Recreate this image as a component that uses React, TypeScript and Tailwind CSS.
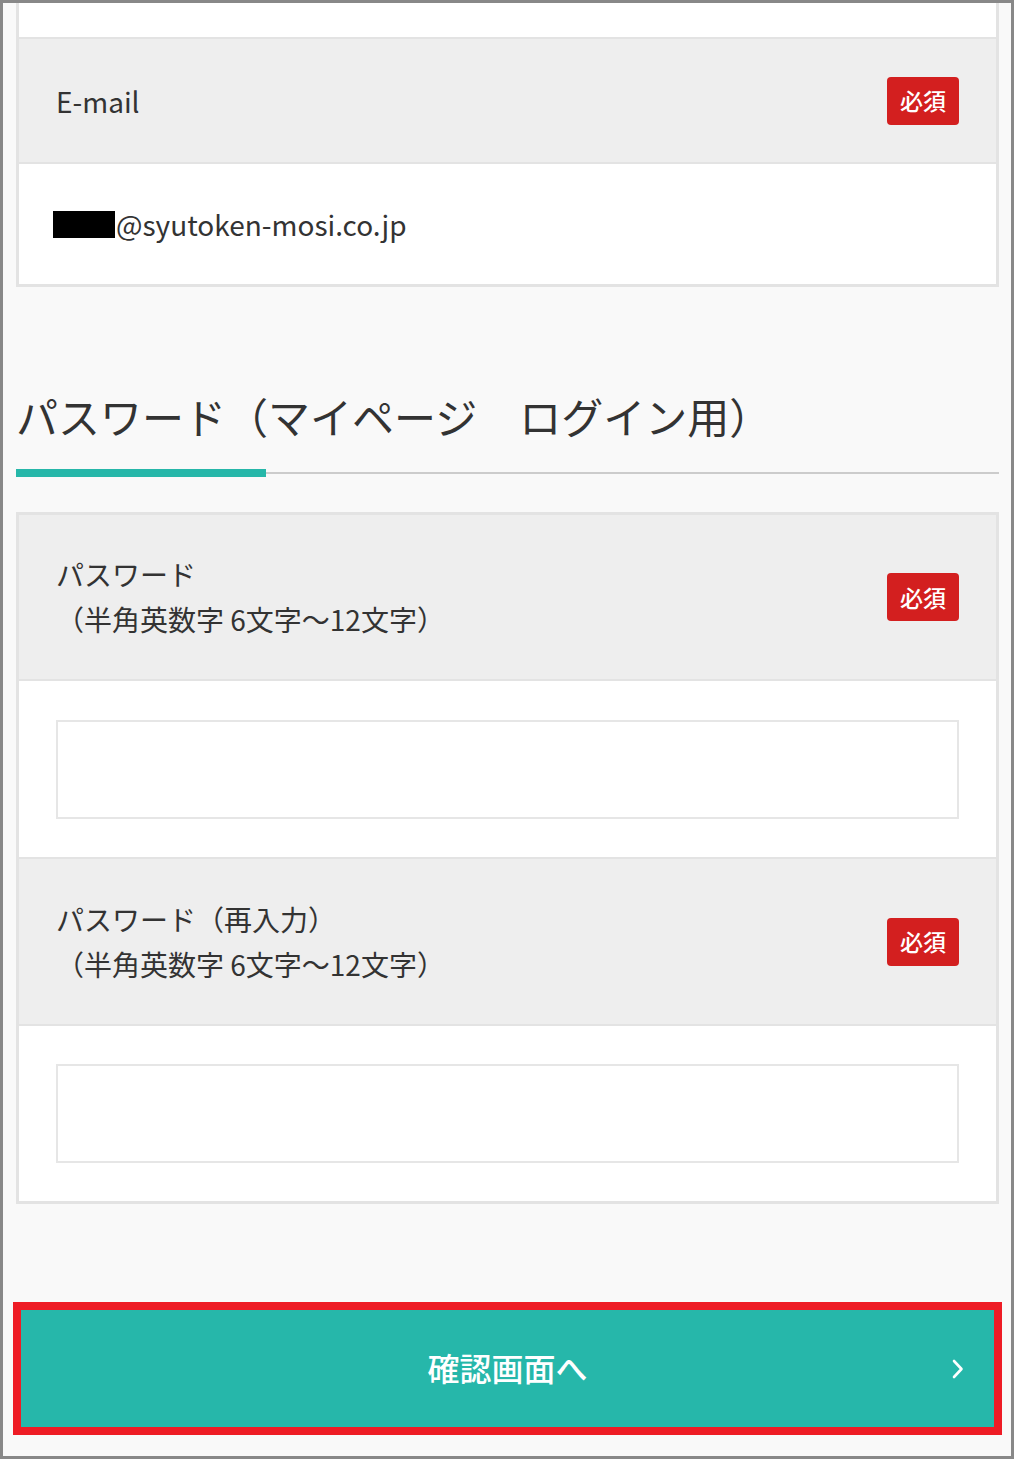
import React from "react";

const font = { fontFamily: '"Noto Sans CJK JP", "Noto Sans", sans-serif' };

function Badge() {
  return (
    <div className="flex h-[48px] w-[72px] shrink-0 items-center justify-center rounded-[4px] bg-[#d31f1f] text-[23px] font-medium text-white">
      必須
    </div>
  );
}

function HeaderRow({ lines, h }: { lines: string[]; h: string }) {
  return (
    <div className={`flex items-center justify-between bg-[#eeeeee] pl-[37px] pr-[37px] ${h}`}>
      <div className="text-[28px] leading-[45px] text-[#333333]">
        {lines.map((l, i) => (
          <div key={i}>{l}</div>
        ))}
      </div>
      <Badge />
    </div>
  );
}

function InputRow({ h }: { h: string }) {
  return (
    <div className={`flex items-center bg-white pl-[37px] pr-[37px] ${h}`}>
      <div className="h-[99px] w-full border-2 border-[#e6e6e6] bg-white" />
    </div>
  );
}

export default function App() {
  return (
    <div
      className="box-border h-[1459px] w-[1014px] overflow-hidden border-[3px] border-[#888888] bg-[#f9f9f9]"
      style={font}
    >
      <div className="pl-[13px] pr-[12px]">
        {/* E-mail card (continuing from above) */}
        <div className="border-x-[3px] border-b-[3px] border-[#e3e3e3] bg-white">
          <div className="h-[34px] bg-white" />
          <div className="h-[2px] bg-[#e3e3e3]" />
          <div className="flex h-[123px] items-center justify-between bg-[#eeeeee] pl-[37px] pr-[37px]">
            <div className="text-[28px] text-[#333333]">E-mail</div>
            <Badge />
          </div>
          <div className="h-[2px] bg-[#e3e3e3]" />
          <div className="flex h-[120px] items-center bg-white pl-[34px]">
            <div className="flex items-center text-[28px] text-[#333333]">
              <span className="mr-[1px] inline-block h-[27px] w-[62px] bg-black" />
              <span>@syutoken-mosi.co.jp</span>
            </div>
          </div>
        </div>

        {/* Heading */}
        <div className="mt-[99px]">
          <div className="h-[60px] text-[42px] leading-[60px] text-[#333333]">
            パスワード（マイページ　ログイン用）
          </div>
          <div className="mt-[23px] flex items-center">
            <div className="h-[8px] w-[250px] bg-[#26b7a9]" />
            <div className="h-[2px] flex-1 bg-[#cccccc]" />
          </div>
        </div>

        {/* Password card */}
        <div className="mt-[35px] border-[3px] border-[#e3e3e3] bg-white">
          <HeaderRow h="h-[164px]" lines={["パスワード", "（半角英数字 6文字～12文字）"]} />
          <div className="h-[2px] bg-[#e3e3e3]" />
          <InputRow h="h-[176px]" />
          <div className="h-[2px] bg-[#e3e3e3]" />
          <HeaderRow h="h-[165px]" lines={["パスワード（再入力）", "（半角英数字 6文字～12文字）"]} />
          <div className="h-[2px] bg-[#e3e3e3]" />
          <InputRow h="h-[175px]" />
        </div>

        {/* Button with highlight */}
        <div className="-ml-[3px] -mr-[3px] mt-[98px] border-[8px] border-[#ee1c25]">
          <div className="relative flex h-[117px] items-center justify-center bg-[#26b7aa]">
            <span className="-mt-[4px] text-[32px] font-medium text-white">確認画面へ</span>
            <svg
              className="absolute right-[29px] top-1/2 -translate-y-1/2"
              width="14"
              height="22"
              viewBox="0 0 14 22"
              fill="none"
            >
              <path d="M3 3 L10.5 11 L3 19" stroke="white" strokeWidth="2.6" strokeLinecap="round" strokeLinejoin="round" />
            </svg>
          </div>
        </div>
      </div>
    </div>
  );
}
